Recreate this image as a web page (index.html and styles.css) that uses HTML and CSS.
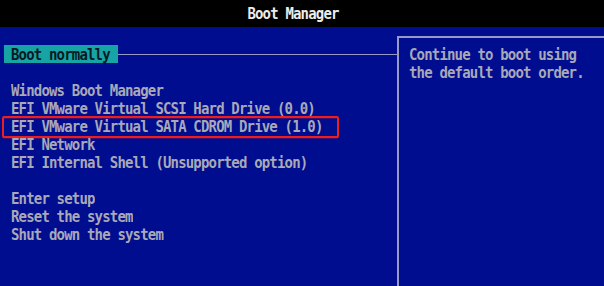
FILE: index.html
```html
<!DOCTYPE html>
<html>
<head>
  <title>Boot Manager</title>
  <link rel="stylesheet" href="styles.css">
</head>
<body>
  <div class="titlebar"><span class="tall">Boot Manager</span></div>
  <div class="screen">
    <div class="menu">
      <div class="selected-row">
        <span class="selected"><span class="tall">Boot normally</span></span>
        <span class="rule"></span>
      </div>
      <div class="gap"></div>
      <div class="item tall">Windows Boot Manager</div>
      <div class="item tall">EFI VMware Virtual SCSI Hard Drive (0.0)</div>
      <div class="item tall marked">EFI VMware Virtual SATA CDROM Drive (1.0)</div>
      <div class="item tall">EFI Network</div>
      <div class="item tall">EFI Internal Shell (Unsupported option)</div>
      <div class="gap"></div>
      <div class="item tall">Enter setup</div>
      <div class="item tall">Reset the system</div>
      <div class="item tall">Shut down the system</div>
    </div>
    <div class="help">
      <div class="tall">Continue to boot using</div>
      <div class="tall">the default boot order.</div>
    </div>
  </div>
</body>
</html>
```

FILE: styles.css
```css
html, body {
  margin: 0;
  height: 100%;
}
body {
  background-color: rgb(0, 13, 143); /* BIOS blue */
  color: rgb(168, 168, 184);
  font-family: "DejaVu Sans Mono", "Liberation Mono", monospace;
  font-size: 14px;
  font-weight: bold;
  letter-spacing: -0.83px;
  line-height: 18px;
  display: flex;
  flex-direction: column;
  overflow: hidden;
}
.tall {
  display: inline-block;
  transform: scaleY(1.12);
}
.titlebar {
  background-color: #000;
  color: rgb(236, 236, 236);
  height: 27px;
  line-height: 27px;
  padding-right: 18px;
  text-align: center;
  flex: none;
}
.screen {
  flex: 1;
  display: flex;
}
.menu {
  width: 397px;
  padding-top: 18px;
  flex: none;
}
.selected-row {
  display: flex;
  align-items: center;
  padding-left: 4px;
}
.selected {
  background-color: rgb(22, 164, 164);
  color: rgb(6, 26, 36);
  padding: 0 8px 0 7px;
}
.rule {
  flex: 1;
  height: 1px;
  background-color: rgb(150, 154, 196);
}
.gap {
  height: 18px;
}
.item {
  display: block;
  padding-left: 11px;
  white-space: pre;
}
.marked {
  position: relative;
}
.marked::after {
  content: "";
  position: absolute;
  left: 2px;
  top: 0;
  width: 333px;
  height: 16px;
  border: 2.5px solid rgb(236, 30, 30);
  border-radius: 2px;
}
.help {
  flex: 1;
  margin-top: 9px;
  border-top: 2px solid rgb(150, 154, 196);
  border-left: 2px solid rgb(150, 154, 196);
  padding: 7px 0 0 10px;
}
.help .tall {
  display: block;
}
```
